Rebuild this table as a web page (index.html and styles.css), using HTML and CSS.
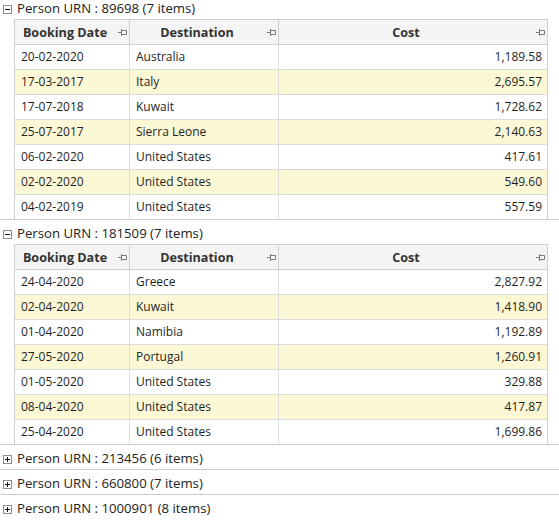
FILE: index.html
```html
<!DOCTYPE html>
<html>
<head>
<meta charset="utf-8">
<link rel="stylesheet" href="styles.css">
</head>
<body>
<div class="grid">
  <div class="group first">
    <div class="group-head"><span class="toggle minus"></span><span class="group-title">Person URN : 89698 (7 items)</span></div>
    <div class="table">
      <div class="hcell"><span class="hlabel">Booking Date</span><svg class="pin" width="9" height="7" viewBox="0 0 9 7"><path d="M0 3.5H3.5M3.5 0V7M3.5 1.5H8.5V5.5H3.5" fill="none" stroke="#7a7a7a" stroke-width="1"/></svg></div>
      <div class="hcell"><span class="hlabel">Destination</span><svg class="pin" width="9" height="7" viewBox="0 0 9 7"><path d="M0 3.5H3.5M3.5 0V7M3.5 1.5H8.5V5.5H3.5" fill="none" stroke="#7a7a7a" stroke-width="1"/></svg></div>
      <div class="hcell"><span class="hlabel">Cost</span><svg class="pin" width="9" height="7" viewBox="0 0 9 7"><path d="M0 3.5H3.5M3.5 0V7M3.5 1.5H8.5V5.5H3.5" fill="none" stroke="#7a7a7a" stroke-width="1"/></svg></div>

      <div class="cell">20-02-2020</div><div class="cell">Australia</div><div class="cell num">1,189.58</div>
      <div class="cell alt">17-03-2017</div><div class="cell alt">Italy</div><div class="cell num alt">2,695.57</div>
      <div class="cell">17-07-2018</div><div class="cell">Kuwait</div><div class="cell num">1,728.62</div>
      <div class="cell alt">25-07-2017</div><div class="cell alt">Sierra Leone</div><div class="cell num alt">2,140.63</div>
      <div class="cell">06-02-2020</div><div class="cell">United States</div><div class="cell num">417.61</div>
      <div class="cell alt">02-02-2020</div><div class="cell alt">United States</div><div class="cell num alt">549.60</div>
      <div class="cell last">04-02-2019</div><div class="cell last">United States</div><div class="cell num last">557.59</div>
    </div>
  </div>

  <div class="group">
    <div class="group-head"><span class="toggle minus"></span><span class="group-title">Person URN : 181509 (7 items)</span></div>
    <div class="table">
      <div class="hcell"><span class="hlabel">Booking Date</span><svg class="pin" width="9" height="7" viewBox="0 0 9 7"><path d="M0 3.5H3.5M3.5 0V7M3.5 1.5H8.5V5.5H3.5" fill="none" stroke="#7a7a7a" stroke-width="1"/></svg></div>
      <div class="hcell"><span class="hlabel">Destination</span><svg class="pin" width="9" height="7" viewBox="0 0 9 7"><path d="M0 3.5H3.5M3.5 0V7M3.5 1.5H8.5V5.5H3.5" fill="none" stroke="#7a7a7a" stroke-width="1"/></svg></div>
      <div class="hcell"><span class="hlabel">Cost</span><svg class="pin" width="9" height="7" viewBox="0 0 9 7"><path d="M0 3.5H3.5M3.5 0V7M3.5 1.5H8.5V5.5H3.5" fill="none" stroke="#7a7a7a" stroke-width="1"/></svg></div>

      <div class="cell">24-04-2020</div><div class="cell">Greece</div><div class="cell num">2,827.92</div>
      <div class="cell alt">02-04-2020</div><div class="cell alt">Kuwait</div><div class="cell num alt">1,418.90</div>
      <div class="cell">01-04-2020</div><div class="cell">Namibia</div><div class="cell num">1,192.89</div>
      <div class="cell alt">27-05-2020</div><div class="cell alt">Portugal</div><div class="cell num alt">1,260.91</div>
      <div class="cell">01-05-2020</div><div class="cell">United States</div><div class="cell num">329.88</div>
      <div class="cell alt">08-04-2020</div><div class="cell alt">United States</div><div class="cell num alt">417.87</div>
      <div class="cell last">25-04-2020</div><div class="cell last">United States</div><div class="cell num last">1,699.86</div>
    </div>
  </div>

  <div class="group">
    <div class="group-head"><span class="toggle plus"></span><span class="group-title">Person URN : 213456 (6 items)</span></div>
  </div>
  <div class="group">
    <div class="group-head"><span class="toggle plus"></span><span class="group-title">Person URN : 660800 (7 items)</span></div>
  </div>
  <div class="group">
    <div class="group-head"><span class="toggle plus"></span><span class="group-title">Person URN : 1000901 (8 items)</span></div>
  </div>
</div>
</body>
</html>
```

FILE: styles.css
```css
html, body {
  margin: 0;
  padding: 0;
  background: #ffffff;
}
body {
  font-family: "Open Sans", "Noto Sans", "DejaVu Sans", sans-serif;
  font-size: 12px;
  color: #1f1f1f;
  overflow: hidden;
}
.grid {
  width: 559px;
}
.group {
  border-top: 1px solid #cbcbcb;
}
.group.first {
  border-top: none;
  margin-top: -5px;
}
.group-head {
  height: 24px;
  display: flex;
  align-items: flex-start;
  padding-top: 5px;
  box-sizing: border-box;
}
.toggle {
  width: 9px;
  height: 9px;
  box-sizing: border-box;
  border: 1px solid #8f8f8f;
  margin: 5px 5px 0 3px;
  position: relative;
  background: #fff;
  flex: none;
}
.toggle::before {
  content: "";
  position: absolute;
  left: 1px;
  top: 3px;
  width: 5px;
  height: 1px;
  background: #111;
}
.toggle.plus::after {
  content: "";
  position: absolute;
  left: 3px;
  top: 1px;
  width: 1px;
  height: 5px;
  background: #111;
}
.group-title {
  font-size: 13.2px;
  line-height: 16px;
  color: #222;
  white-space: nowrap;
}
.table {
  margin-left: 14px;
  width: 534px;
  box-sizing: border-box;
  border-left: 1px solid #d0d0d0;
  border-right: 1px solid #d0d0d0;
  border-top: 1px solid #d0d0d0;
  display: grid;
  grid-template-columns: 115px 149px 268px;
}
.hcell {
  height: 25px;
  box-sizing: border-box;
  border-right: 1px solid #d0d0d0;
  border-bottom: 1px solid #d0d0d0;
  background: #f4f4f4;
  display: flex;
  align-items: center;
  font-weight: bold;
  font-size: 12.6px;
  color: #333;
}
.hcell:nth-child(3) {
  border-right: none;
}
.hlabel {
  flex: 1;
  text-align: center;
  white-space: nowrap;
}
.pin {
  flex: none;
  margin-right: 2px;
  margin-left: 3px;
}
.cell {
  height: 25px;
  box-sizing: border-box;
  border-right: 1px solid #dcdcdc;
  border-bottom: 1px solid #dcdcdc;
  line-height: 24px;
  padding: 0 5px 0 6px;
  white-space: nowrap;
  color: #1f1f1f;
}
.cell.num {
  text-align: right;
  border-right: none;
}
.cell.alt {
  background: #fcf8d6;
}
.cell.last {
  border-bottom: none;
  height: 24px;
}
```
